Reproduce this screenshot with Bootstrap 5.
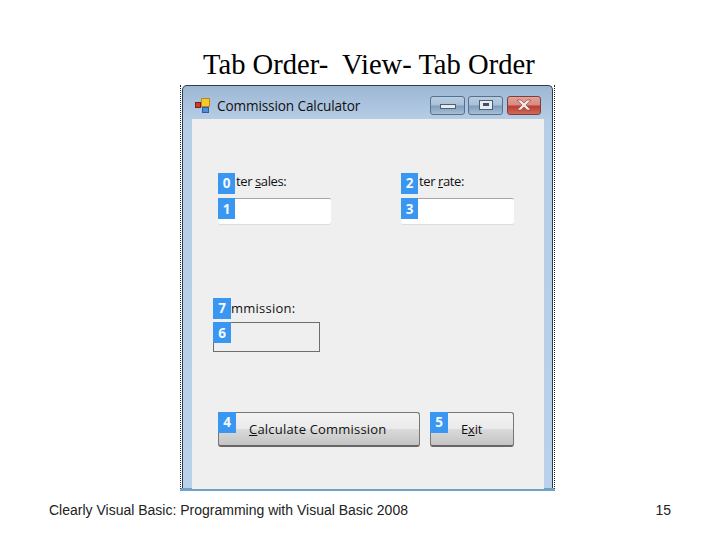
<!DOCTYPE html>
<html lang="en">
<head>
<meta charset="utf-8">
<title>Tab Order</title>
<link rel="stylesheet" href="https://cdn.jsdelivr.net/npm/bootstrap@5.3.0/dist/css/bootstrap.min.css">
<style>
html,body{height:540px;overflow:hidden;background:#fff}
.slide{width:720px;height:540px}
.slide-head{font:28.6px/32px "Liberation Serif",serif;color:#000;margin:0;padding:49px 0 0 203px;height:85px;white-space:nowrap}
.capture{width:375px;height:406px;margin-left:180px;border-left:1px dotted #222;border-right:1px dotted #222;border-bottom:3px solid #6fa3c6;padding:0 1px 0 1px}
.win{height:403px;border-radius:5px 5px 0 0;border:1px solid #2c3e4e;border-bottom:0;background:linear-gradient(180deg,#9db7d3 0,#b6cde6 34px,#b9d1ea 100%);padding:0 8px 0 9px}
.win-bar{height:33px;padding-top:6px;color:#111;font:13.6px/1 "Open Sans",sans-serif}
.win-name{margin-left:6px;width:150px;white-space:nowrap;letter-spacing:-.12px}
.win-icon{margin-left:2px}
.win-ctls{gap:3px;margin-right:3px;margin-top:-1px}
.ctl{width:35px;height:19px;border:1px solid #56718c;border-radius:3px;background:linear-gradient(180deg,#b9cde2 0,#a9c0d9 48%,#7f9cba 52%,#a5bfd9 100%)}
.ctl-close{width:34px;margin-left:1px;background:linear-gradient(180deg,#e3a29a 0,#d98a80 45%,#bd3d30 55%,#d06a5c 100%);border-color:#7d4038}
.ctl-glyph{display:block;background:#e6ecf2;border:1px solid #4d5f72}
.glyph-min{width:16px;height:5px;margin-top:3px}
.glyph-max{width:14px;height:10px;position:relative}
.glyph-max::after{content:"";position:absolute;left:3px;top:2px;width:6px;height:3px;background:#3d5068}
.client{height:370px;background:#efefef;padding:54px 0 0 26px;font:13px/1 "Open Sans",sans-serif;color:#111}
.field-a{width:113px}
.field-gap{gap:70px}
.field-label{height:25px;padding:2px 0 0 18px;white-space:nowrap}
.label-tight{letter-spacing:-.4px}
.field-box{height:26px;border:0;border-top:1px solid #a5a5a5;border-radius:2px;padding:0;background:#fff;box-shadow:0 1px 0 #ddd}
.field-out{width:107px;margin:75px 0 0 -5px}
.field-out .field-label{height:23px;padding-left:18px;padding-top:3px;letter-spacing:.25px}
.out-box{height:30px;border:1px solid #6e6e6e;background:#efefef}
.tab-tag{position:absolute;left:0;width:17px;height:21px;background:#3a97f1;color:#f4f9ff;font:bold 13.5px/21px "Open Sans",sans-serif;text-align:center;border-radius:0}
.tag-1{top:0}.tag-2{top:25px;line-height:23px}
.out-tag{width:18px}
.out-tag.tag-1{top:-1px}.out-tag.tag-2{top:23px}
.btn-row{margin-top:60px;gap:10px}
.btn-win{height:35px;padding:0 0 0 30px;border:1px solid #777;border-bottom:2px solid #666;border-radius:3px;background:linear-gradient(180deg,#f2f2f2 0,#ebebeb 48%,#d9d9d9 52%,#c4c4c4 100%);font:13px/32px "Open Sans",sans-serif;color:#111;text-align:left;letter-spacing:.2px}
.btn-win:hover{background:#e6e6e6}
.btn-calc{width:202px}
.btn-exit{width:84px;padding-left:30px;letter-spacing:-.2px}
.btn-tag{top:0;width:18px}
.slide-foot{width:720px;padding:9px 49px 0 49px;font:14px/20px "Liberation Sans",sans-serif;color:#222}
</style>
</head>
<body class="m-0">
<div class="slide d-flex flex-column">
  <h1 class="slide-head fw-normal">Tab Order-&nbsp; View- Tab Order</h1>
  <div class="capture">
    <div class="win">
      <div class="win-bar d-flex align-items-center">
        <svg class="win-icon" width="17" height="17" viewBox="0 0 17 17" aria-hidden="true">
          <rect x="7.5" y="1.5" width="8" height="8" fill="#f5c92e" stroke="#b58a1d"/>
          <rect x="1.5" y="5.5" width="5" height="5" fill="#cf3a30" stroke="#7e2018"/>
          <rect x="8.5" y="10.5" width="6" height="5" fill="#4d8fdc" stroke="#2d5c9a"/>
        </svg>
        <span class="win-name">Commission Calculator</span>
        <div class="win-ctls d-flex ms-auto">
          <span class="ctl d-flex align-items-center justify-content-center"><i class="ctl-glyph glyph-min"></i></span>
          <span class="ctl d-flex align-items-center justify-content-center"><i class="ctl-glyph glyph-max"></i></span>
          <span class="ctl ctl-close d-flex align-items-center justify-content-center">
            <svg width="18" height="12" viewBox="0 0 18 12" aria-hidden="true"><path d="M2 1h4l3 3 3-3h4l-5 5 5 5h-4l-3-3-3 3H2l5-5z" fill="#efe6e2" stroke="#7a3a32" stroke-width=".6"/></svg>
          </span>
        </div>
      </div>
      <div class="client">
        <div class="d-flex field-gap">
          <div class="field-a position-relative">
            <div class="field-label label-tight">ter <u>s</u>ales:</div>
            <input class="form-control field-box" type="text" aria-label="Enter sales">
            <span class="tab-tag tag-1">0</span><span class="tab-tag tag-2">1</span>
          </div>
          <div class="field-a position-relative">
            <div class="field-label label-tight">ter <u>r</u>ate:</div>
            <input class="form-control field-box" type="text" aria-label="Enter rate">
            <span class="tab-tag tag-1">2</span><span class="tab-tag tag-2">3</span>
          </div>
        </div>
        <div class="field-out position-relative">
          <div class="field-label">mmission:</div>
          <div class="out-box"></div>
          <span class="tab-tag out-tag tag-1">7</span><span class="tab-tag out-tag tag-2">6</span>
        </div>
        <div class="d-flex btn-row">
          <div class="position-relative">
            <button class="btn btn-win btn-calc" type="button"><u>C</u>alculate Commission</button>
            <span class="tab-tag btn-tag">4</span>
          </div>
          <div class="position-relative">
            <button class="btn btn-win btn-exit" type="button">E<u>x</u>it</button>
            <span class="tab-tag btn-tag">5</span>
          </div>
        </div>
      </div>
    </div>
  </div>
  <div class="slide-foot d-flex justify-content-between">
    <span>Clearly Visual Basic: Programming with Visual Basic 2008</span><span>15</span>
  </div>
</div>
<script src="https://cdn.jsdelivr.net/npm/bootstrap@5.3.0/dist/js/bootstrap.bundle.min.js"></script>
</body>
</html>
